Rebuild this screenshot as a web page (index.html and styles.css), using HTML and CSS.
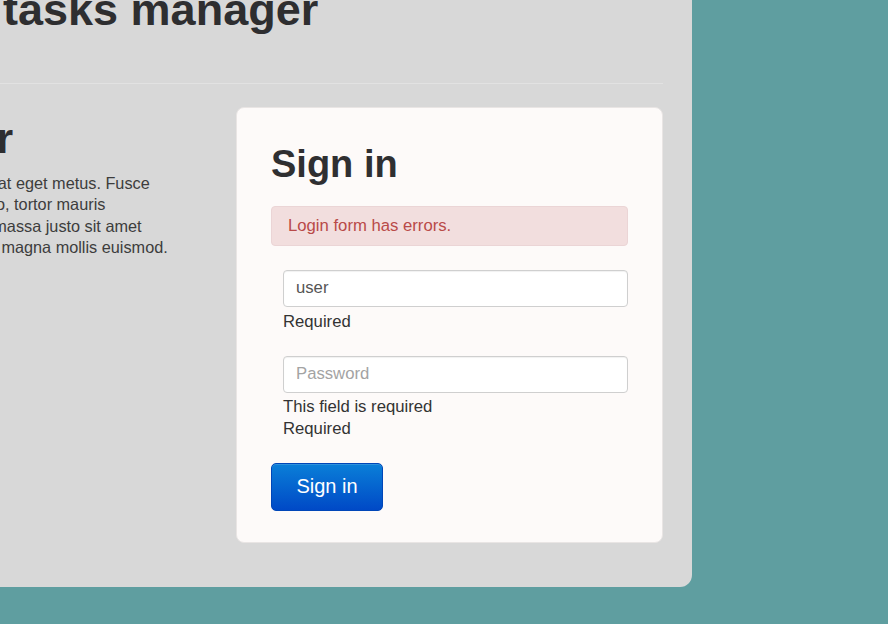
FILE: index.html
```html
<!DOCTYPE html>
<html lang="en">
<head>
<meta charset="utf-8">
<title>Distributed tasks manager</title>
<link rel="stylesheet" href="styles.css">
</head>
<body>
<div class="page">
  <h1 class="title">Distributed tasks manager</h1>
  <hr class="divider">
  <div class="row">
    <div class="intro">
      <h2 class="intro-heading">Your planner</h2>
      <p class="intro-text">Donec id elit non mi porta gravida at eget metus. Fusce dapibus, tellus ac cursus commodo, tortor mauris condimentum nibh, ut fermentum massa justo sit amet risus. Etiam porta sem malesuada magna mollis euismod.</p>
    </div>
    <div class="card">
      <h2 class="card-title">Sign in</h2>
      <div class="alert">Login form has errors.</div>
      <form class="form">
        <div class="field">
          <input class="input" type="text" value="user">
          <div class="help">Required</div>
        </div>
        <div class="field">
          <input class="input" type="password" placeholder="Password">
          <div class="help">This field is required</div>
          <div class="help">Required</div>
        </div>
      </form>
      <button class="btn" type="button">Sign in</button>
    </div>
  </div>
</div>
</body>
</html>
```
FILE: styles.css
```css
html, body {
  margin: 0;
  padding: 0;
}
body {
  background: #5f9ea0;
  font-family: "Liberation Sans", Arial, sans-serif;
  color: #333;
  overflow: hidden;
}
.page {
  box-sizing: border-box;
  width: 968px;
  margin: -15px 0 0 -276px;
  padding: 0 29px 44px;
  background: #d8d8d8;
  border-radius: 0 0 12px 0;
}
.title {
  margin: 0;
  font-size: 45px;
  line-height: 49.5px;
  font-weight: bold;
  color: #2e2e30;
  white-space: nowrap;
}
.divider {
  margin: 48px 0 0;
  border: 0;
  border-top: 1px solid #e2e2e2;
  height: 0;
}
.row {
  display: flex;
  gap: 62px;
  margin-top: 23px;
  align-items: flex-start;
}
.intro {
  width: 421px;
  flex: none;
}
.intro-heading {
  margin: 8px 0 0;
  font-size: 42.7px;
  line-height: 47px;
  font-weight: bold;
  color: #2e2e30;
  white-space: nowrap;
}
.intro-text {
  margin: 11px 0 0 -2px;
  font-size: 16.28px;
  line-height: 21.6px;
  color: #3d3d3d;
}
.card {
  box-sizing: border-box;
  width: 427px;
  flex: none;
  padding: 35px 34px 31px;
  background: #fdfaf9;
  border: 1px solid #e9e5e4;
  border-radius: 8px;
}
.card-title {
  margin: 0;
  font-size: 38px;
  line-height: 42px;
  font-weight: bold;
  color: #2f2f31;
}
.alert {
  margin-top: 21px;
  padding: 0 16px;
  height: 38px;
  line-height: 38px;
  font-size: 16.7px;
  color: #b94a48;
  background: #f2dede;
  border: 1px solid #ebd5d6;
  border-radius: 4px;
}
.form {
  margin: 24px 0 0 12px;
}
.field + .field {
  margin-top: 23px;
}
.input {
  display: block;
  box-sizing: border-box;
  width: 100%;
  height: 37px;
  margin: 0 0 3px;
  padding: 0 12px;
  font-family: "Liberation Sans", Arial, sans-serif;
  font-size: 16.7px;
  color: #555;
  background: #fff;
  border: 1px solid #cfcfcf;
  border-radius: 4px;
  box-shadow: inset 0 1px 1px rgba(0, 0, 0, 0.06);
  outline: none;
}
.field:first-child .input {
  margin-bottom: 4px;
}
.input::placeholder {
  color: #a3a3a3;
}
.help {
  font-size: 16.7px;
  line-height: 22px;
  color: #333;
}
.btn {
  display: block;
  margin-top: 23px;
  box-sizing: border-box;
  width: 112px;
  height: 48px;
  padding: 0;
  font-family: "Liberation Sans", Arial, sans-serif;
  font-size: 20px;
  color: #fff;
  background: linear-gradient(#0a7fd8, #0049c6);
  border: 1px solid #0046b8;
  border-radius: 5px;
  box-shadow: inset 0 1px 0 rgba(255, 255, 255, 0.15);
  cursor: pointer;
}
```
